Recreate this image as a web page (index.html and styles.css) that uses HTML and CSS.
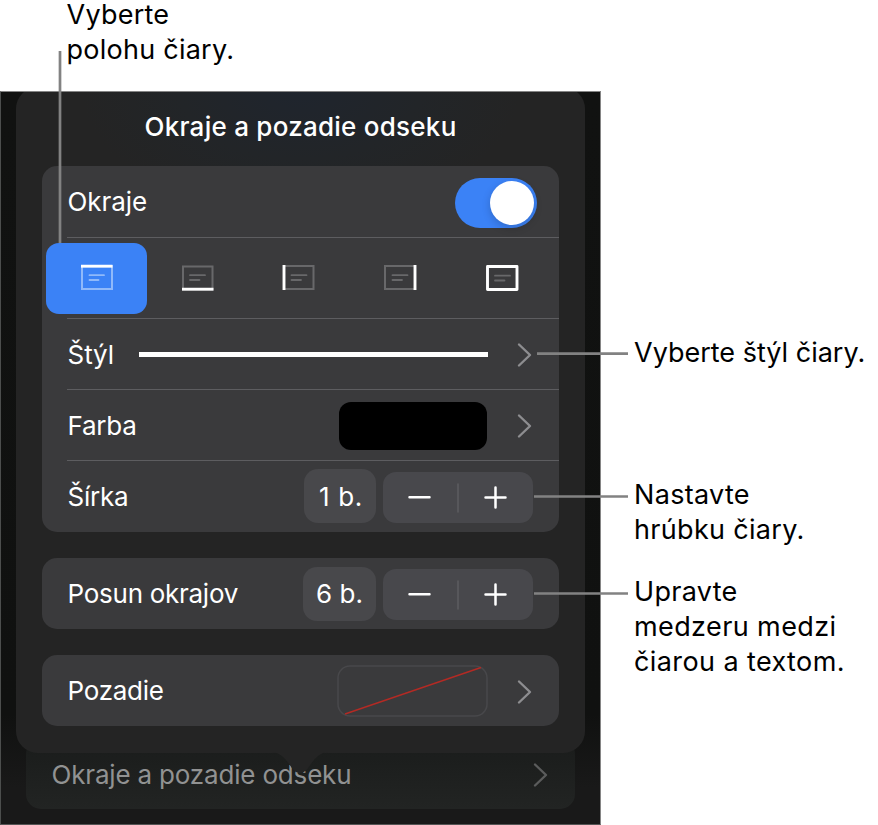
FILE: index.html
```html
<!DOCTYPE html>
<html lang="sk">
<head>
<meta charset="utf-8">
<title>Okraje a pozadie odseku</title>
<link rel="stylesheet" href="styles.css">
</head>
<body>
<main class="figure">
  <p class="note note-top"><span class="first-line">Vyberte</span>polohu čiary.</p>
  <div class="main">
    <section class="device">
      <div class="popover">
        <h1 class="title">Okraje a pozadie odseku</h1>

        <div class="card card-borders">
          <div class="row">
            <span class="label">Okraje</span>
            <span class="toggle"><span class="knob"></span></span>
          </div>
          <div class="row positions">
            <span class="position selected">
              <svg class="edge" viewBox="0 0 34 28"><rect class="box" x="2" y="2" width="30" height="23"/><path class="lines" d="M9.500 11.200h14.500M9.500 16h9"/><path class="strong" d="M1 2.200h31.500"/></svg>
            </span>
            <span class="position">
              <svg class="edge" viewBox="0 0 34 28"><rect class="box" x="2" y="2.500" width="29.500" height="23"/><path class="lines" d="M9 11.200h15M9 16h9.500"/><path class="strong" d="M1 25.200h31.500"/></svg>
            </span>
            <span class="position">
              <svg class="edge" viewBox="0 0 34 28"><rect class="box" x="2" y="2" width="29.500" height="23"/><path class="lines" d="M9.500 11.200h15M9.500 16h9.500"/><path class="strong" d="M2 1v25"/></svg>
            </span>
            <span class="position">
              <svg class="edge" viewBox="0 0 34 28"><rect class="box" x="1" y="2" width="30" height="23"/><path class="lines" d="M8.500 11.200h15M8.500 16h9.500"/><path class="strong" d="M31 1v25"/></svg>
            </span>
            <span class="position">
              <svg class="edge" viewBox="0 0 34 28"><path class="lines" d="M10 11.700h15M10 16.500h9.500"/><rect class="strong" x="2.500" y="2.500" width="29.500" height="23"/></svg>
            </span>
          </div>
          <div class="row">
            <span class="label">Štýl</span>
            <span class="stroke-preview"></span>
            <svg class="chevron" viewBox="0 0 16 26"><path d="M2 2.500 13 13 2 23.500"/></svg>
          </div>
          <div class="row">
            <span class="label tight">Farba</span>
            <span class="swatch"></span>
            <svg class="chevron" viewBox="0 0 16 26"><path d="M2 2.500 13 13 2 23.500"/></svg>
          </div>
          <div class="row">
            <span class="label tight">Šírka</span>
            <span class="value one">1 b.</span>
            <span class="stepper low">
              <svg viewBox="0 0 150 52"><path class="sep" d="M75 12v28"/><path d="M26.500 25.200h20M102.500 25.500h20M112.500 15.500v20"/></svg>
            </span>
          </div>
        </div>

        <div class="card">
          <div class="row">
            <span class="label tight">Posun okrajov</span>
            <span class="value">6 b.</span>
            <span class="stepper">
              <svg viewBox="0 0 150 52"><path class="sep" d="M75 12v28"/><path d="M26.500 25.200h20M102.500 25.500h20M112.500 15.500v20"/></svg>
            </span>
          </div>
        </div>

        <div class="card">
          <div class="row">
            <span class="label tight">Pozadie</span>
            <svg class="no-fill" viewBox="0 0 151 52"><rect x="1" y="1" width="149" height="50" rx="12"/><path d="M8 49 144 2.500"/></svg>
            <svg class="chevron" viewBox="0 0 16 26"><path d="M2 2.500 13 13 2 23.500"/></svg>
          </div>
        </div>
        <svg class="arrow" viewBox="0 0 56 24"><path d="M0 0c8 1 12 5 17 12 4 6 7 9 11 9s7-3 11-9c5-7 9-11 17-12z"/></svg>
      </div>

      <div class="source-row">
        <span>Okraje a pozadie odseku</span>
        <svg class="chevron" viewBox="0 0 16 26"><path d="M2 2.500 13 13 2 23.500"/></svg>
      </div>
    </section>

    <aside class="notes">
      <p class="note note-style">Vyberte štýl čiary.</p>
      <p class="note">Nastavte<br>hrúbku čiary.</p>
      <p class="note note-offset">Upravte<br><span class="wide">medzeru medzi<br>čiarou a textom.</span></p>
    </aside>
  </div>
  <svg class="leaders" viewBox="0 0 878 825"><path d="M60 51v192M537 353.700h91M534 496.500h94M534 593.500h94"/></svg>
</main>
</body>
</html>
```
FILE: styles.css
```css
* { box-sizing: border-box; }

body {
  margin: 0;
  background: #fff;
  color: #000;
  font-family: Inter, "Liberation Sans", sans-serif;
}

.figure {
  position: relative;
  width: 878px;
  height: 825px;
  display: flex;
  flex-direction: column;
}

.note {
  margin: 0;
  font-size: 27px;
  line-height: 35px;
  letter-spacing: 0.320px;
  white-space: nowrap;
}

.note-top {
  height: 91px;
  margin-left: 66.500px;
  letter-spacing: 0.250px;
}

.first-line {
  display: block;
  margin-bottom: 3px;
  line-height: 29px;
}

.main { display: flex; height: 734px; }

.device {
  width: 601px;
  padding: 0 15px;
  border: 1px solid #858585;
  border-bottom-color: #555;
  border-left-color: #4c4e4d;
  background: linear-gradient(#111211 0, #101110 85%, #191919 95%);
  overflow: hidden;
}

.popover {
  position: relative;
  z-index: 1;
  width: 569px;
  height: 666px;
  margin-top: -5px;
  padding: 0 26px;
  border-radius: 22px;
  background: radial-gradient(ellipse 220px 130px at 50% 0, #1f252e, #222528 55%, #242424);
}

.title {
  display: flex;
  align-items: center;
  justify-content: center;
  height: 79px;
  margin: 0;
  color: #fff;
  font-size: 26px;
  font-weight: 500;
  letter-spacing: 0.250px;
}

.card {
  height: 71px;
  margin-bottom: 26px;
  border-radius: 15px;
  background: #3a3a3c;
  color: #fff;
}

.card-borders { height: 366px; }

.row {
  display: flex;
  align-items: center;
  height: 71px;
  margin-left: 25px;
  padding-right: 26px;
  font-size: 26px;
}

.row + .row { border-top: 1px solid #5d5d60; }

.label { margin: 0 auto 0 0.600px; letter-spacing: -0.100px; }
.tight { letter-spacing: -0.280px; }

.toggle {
  display: flex;
  justify-content: flex-end;
  align-items: center;
  width: 82px;
  height: 50px;
  margin: 2px -4px 0 0;
  padding-right: 3px;
  border-radius: 25px;
  background: #3b82f6;
}

.knob {
  width: 44px;
  height: 44px;
  border-radius: 50%;
  background: #fff;
  box-shadow: 0 3px 8px rgba(0, 0, 0, 0.18);
}

.row.positions {
  height: 81px;
  padding: 0;
}

.positions .position {
  display: flex;
  flex: none;
  align-items: center;
  justify-content: center;
  width: 101.400px;
  height: 71px;
  border-radius: 13px;
}

.positions .position:first-child { margin-left: -21px; }
.positions .selected { background: #3b82f6; }

.edge { width: 34px; height: 28px; fill: none; }
.edge .box { stroke: #68686a; stroke-width: 2; }
.edge .lines { stroke: #68686a; stroke-width: 1.800; stroke-linecap: round; }
.edge .strong { stroke: #fff; stroke-width: 2.900; stroke-linejoin: round; }
.selected .box, .selected .lines { stroke: #90b9fa; }

.stroke-preview {
  width: 349px;
  height: 5px;
  margin-top: 1px;
  background: #fff;
}

.chevron {
  width: 16px;
  height: 26px;
  margin: 2px 0 0 29px;
  fill: none;
  stroke: #8d8d90;
  stroke-width: 2.400;
  stroke-linecap: round;
  stroke-linejoin: round;
}

.swatch {
  width: 148px;
  height: 48px;
  margin: 2px 1px 0 0;
  border-radius: 12px;
  background: #000;
}

.value {
  display: flex;
  align-items: center;
  justify-content: center;
  width: 73px;
  height: 54px;
  margin-right: 7px;
  border-radius: 14px;
  background: #48484b;
}

.value.one { width: 72px; padding-left: 2px; letter-spacing: 0.700px; }

.stepper {
  width: 150px;
  height: 51px;
  margin-top: 1px;
  border-radius: 13px;
  background: #48484c;
}

.stepper.low { margin-top: 2px; }

.stepper svg {
  display: block;
  width: 150px;
  height: 52px;
  fill: none;
  stroke: #fff;
  stroke-width: 2.500;
  stroke-linecap: round;
}

.stepper .sep { stroke: #5c5c60; stroke-width: 1.500; }

.no-fill { width: 151px; height: 52px; fill: none; }
.no-fill rect { stroke: #48484b; stroke-width: 1.500; }
.no-fill path { stroke: #b32a24; stroke-width: 1.500; }

.arrow {
  position: absolute;
  top: 665px;
  left: 256px;
  width: 56px;
  height: 24px;
  fill: #242424;
}

.source-row {
  display: flex;
  align-items: center;
  justify-content: space-between;
  height: 70px;
  margin: -14px 10px 0 10px;
  padding: 0 26px 0 25.500px;
  border-radius: 15px;
  background: linear-gradient(#1b1d1c 15%, #222423);
  color: #919292;
  font-size: 26px;
  letter-spacing: -0.180px;
}

.source-row .chevron { stroke: #5b5c5c; }

.notes {
  display: flex;
  flex-direction: column;
  padding: 244px 0 0 33px;
}

.note-style { margin-bottom: 107px; letter-spacing: 0; }
.note-offset { margin-top: 27px; }
.wide { letter-spacing: 0.400px; }

.leaders {
  position: absolute;
  z-index: 2;
  inset: 0;
  fill: none;
  stroke: #828282;
  stroke-width: 2.700;
}
```
